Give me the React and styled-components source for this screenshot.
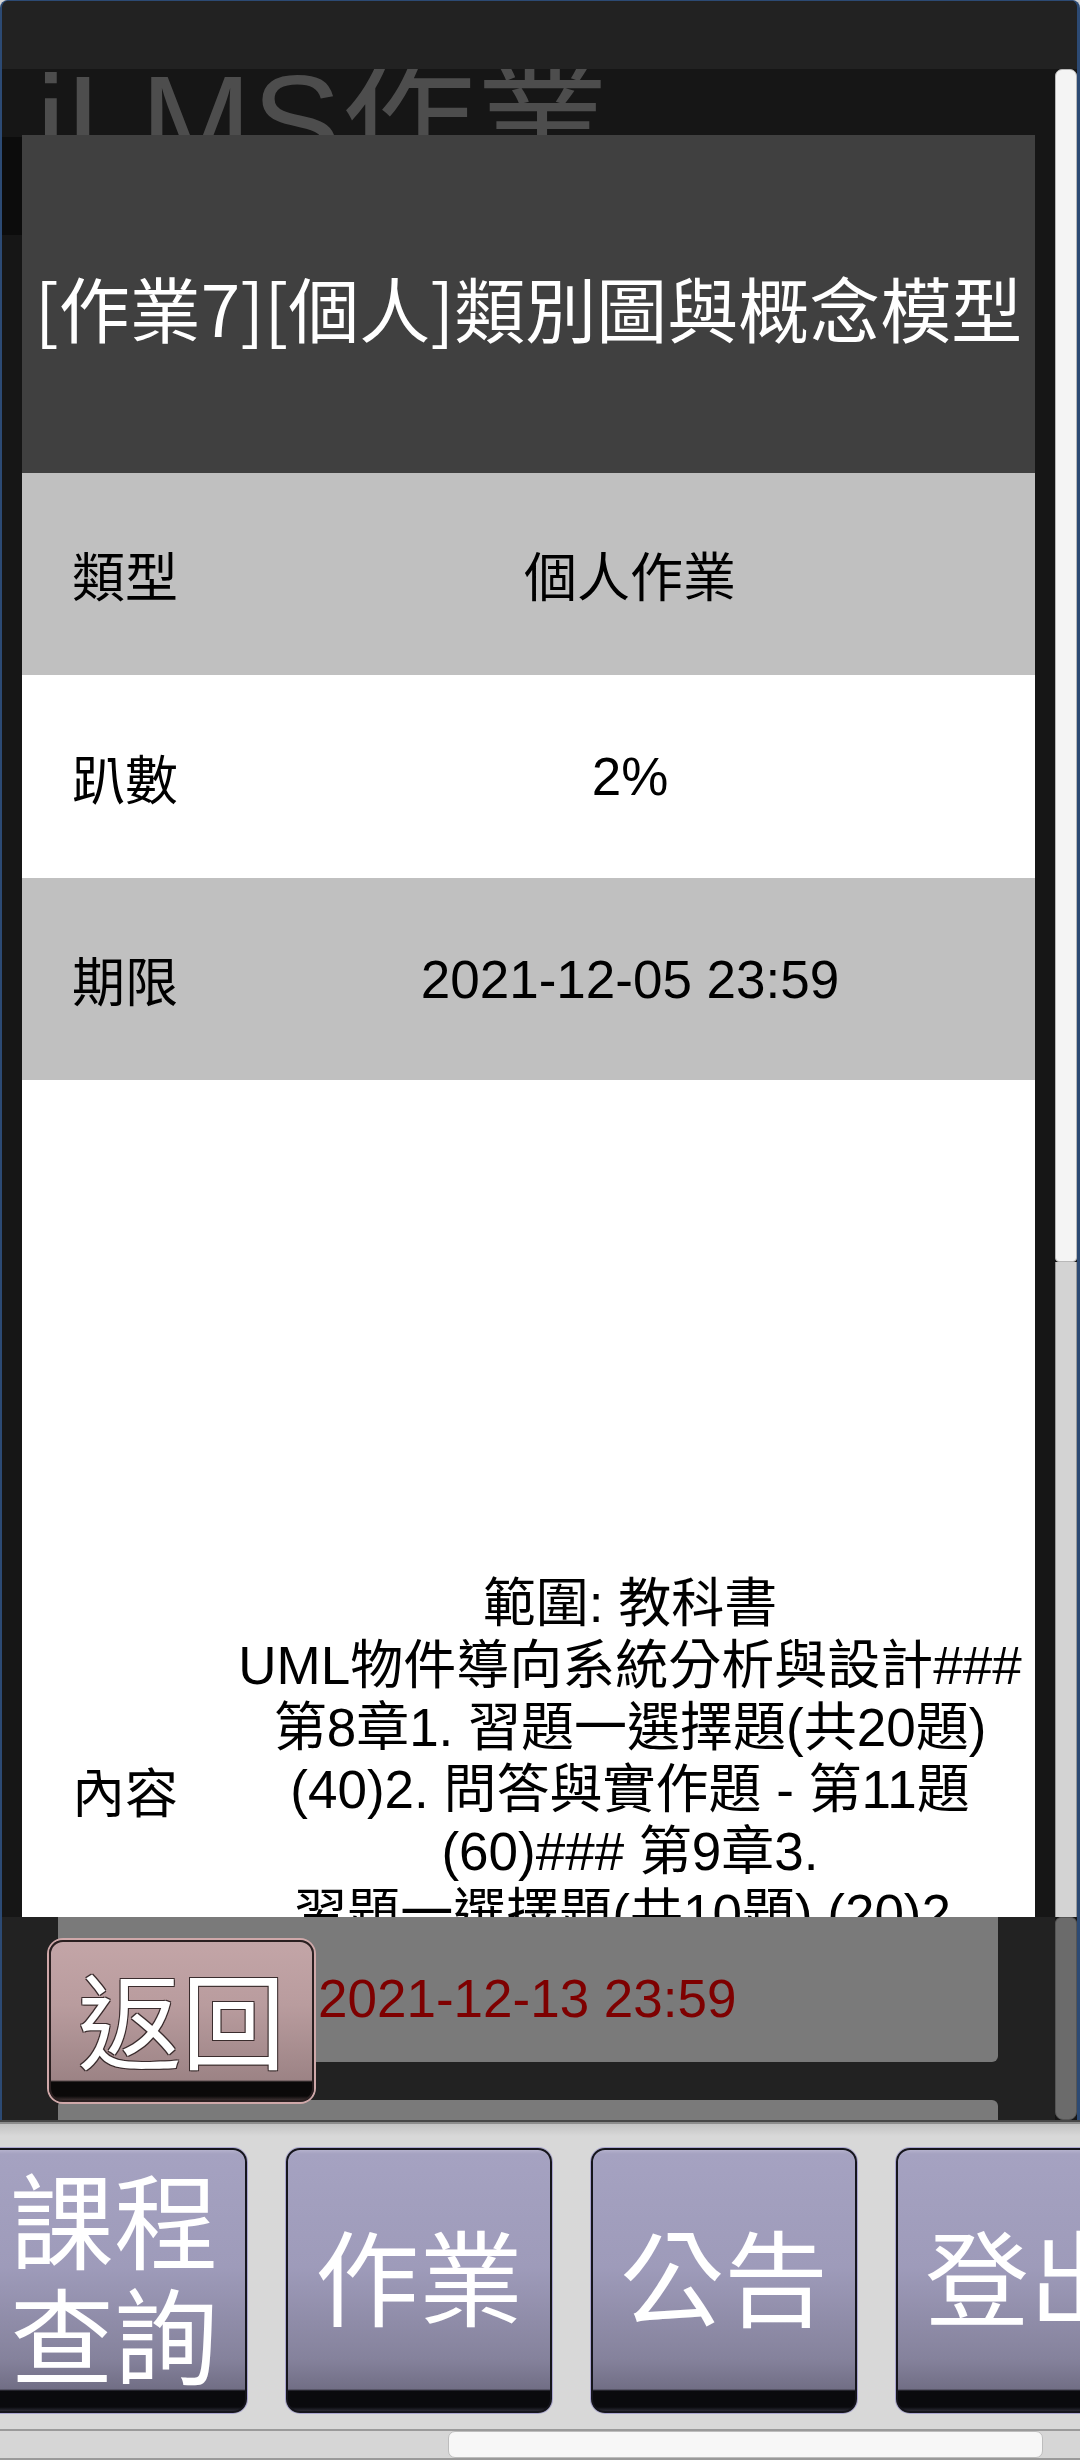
import React from 'react';
import styled, { createGlobalStyle } from 'styled-components';

const CJK = `"Noto Sans CJK TC", "Noto Sans CJK SC", sans-serif`;
const MIX = `"Liberation Sans", "Noto Sans CJK TC", sans-serif`;

const GlobalStyle = createGlobalStyle`
  html, body { margin: 0; padding: 0; background: #d6d6d6; }
  * { box-sizing: border-box; }
  #root { width: 1080px; }
`;

const Screen = styled.div`
  width: 1080px;
  height: 2460px;
  display: flex;
  flex-direction: column;
  overflow: hidden;
  background: #d6d6d6;
`;

const Window = styled.div`
  height: 2120px;
  flex-shrink: 0;
  display: flex;
  flex-direction: column;
  background: #222;
  border-top: 1px solid #2c4a74;
  border-left: 2px solid #2c4a74;
  border-right: 3px solid #2c4a74;
  border-top-left-radius: 8px;
  border-top-right-radius: 8px;
  overflow: hidden;
`;

const TopBar = styled.div`
  height: 68px;
  flex-shrink: 0;
  background: #222;
`;

const Main = styled.div`
  flex: 1;
  display: flex;
  min-height: 0;
`;

const ContentCol = styled.div`
  flex: 1;
  position: relative;
  display: flex;
  flex-direction: column;
  background: #161616;
`;

const PageTitle = styled.div`
  height: 66px;
  flex-shrink: 0;
  overflow: hidden;
  padding-left: 34px;
  font-family: ${MIX};
  font-size: 134px;
  line-height: 134px;
  color: #4d4d4d;
  white-space: nowrap;
  letter-spacing: 0;
`;

const TitleInner = styled.div`
  margin-top: -13px;
`;

const Nub = styled.div`
  width: 20px;
  height: 98px;
  margin-top: 2px;
  background: #0c0c0c;
`;

const Spacer = styled.div`
  flex: 1;
`;

const ListPeek = styled.div`
  position: relative;
  height: 203px;
  flex-shrink: 0;
  background: #222;
  padding-left: 56px;
  display: flex;
  flex-direction: column;
  gap: 38px;
`;

const ListItem = styled.div`
  width: 940px;
  height: ${(p) => p.$h}px;
  flex-shrink: 0;
  background: #7a7a7a;
  border-radius: ${(p) => (p.$top ? '6px 6px 0 0' : '0 0 6px 6px')};
  display: flex;
  align-items: center;
  padding-left: 260px;
  padding-top: 18px;
`;

const DateText = styled.span`
  font-family: ${MIX};
  font-size: 53px;
  color: #7e0000;
  white-space: nowrap;
`;

const BackButton = styled.button`
  position: absolute;
  left: 47px;
  top: 23px;
  width: 265px;
  height: 162px;
  padding: 0 0 8px 0;
  border: 2px solid #2a1f20;
  border-radius: 14px;
  box-shadow: 0 0 0 2px #cfa8a9;
  background: linear-gradient(
    to bottom,
    #c3a5a7 0%,
    #b99c9e 40%,
    #9c8385 calc(100% - 20px),
    #0b0909 calc(100% - 18px),
    #0b0909 calc(100% - 4px),
    #3a2e2f 100%
  );
  display: flex;
  align-items: center;
  justify-content: center;
  font-family: ${CJK};
  font-size: 104px;
  line-height: 1;
  color: #fff;
  text-shadow: 1px 1px 0 #3a2c2d, -1px -1px 0 #3a2c2d, 1px -1px 0 #3a2c2d, -1px 1px 0 #3a2c2d;
`;

const Modal = styled.div`
  position: absolute;
  top: 66px;
  left: 20px;
  width: 1013px;
  height: 1782px;
  overflow: hidden;
  background: #fff;
  display: flex;
  flex-direction: column;
`;

const ModalHeader = styled.div`
  height: 338px;
  flex-shrink: 0;
  background: #404040;
  display: flex;
  align-items: center;
  justify-content: center;
  font-family: ${CJK};
  font-size: 71px;
  color: #fff;
  white-space: nowrap;
  padding-top: 4px;
`;

const InfoRow = styled.div`
  height: ${(p) => p.$h}px;
  flex-shrink: 0;
  background: ${(p) => (p.$shade ? '#c0c0c0' : '#ffffff')};
  display: flex;
  align-items: center;
  font-family: ${MIX};
  font-size: 53px;
  color: #000;
`;

const Label = styled.div`
  width: 203px;
  flex-shrink: 0;
  padding-left: 50px;
  white-space: nowrap;
`;

const Value = styled.div`
  flex: 1;
  text-align: center;
  white-space: nowrap;
`;

const ContentValue = styled.div`
  flex: 1;
  display: flex;
  flex-direction: column;
  align-items: center;
  line-height: 62px;
`;

const Line = styled.div`
  white-space: nowrap;
`;

const ScrollRail = styled.div`
  width: 22px;
  flex-shrink: 0;
  display: flex;
  flex-direction: column;
  background: #161616;
`;

const RailThumb = styled.div`
  height: 1193px;
  background: #f4f4f4;
  border: 1px solid #b8b8b8;
  border-radius: 7px 7px 4px 4px;
`;

const RailTrack = styled.div`
  height: 655px;
  background: #d3d3d3;
  border-left: 1px solid #9a9a9a;
  border-right: 1px solid #9a9a9a;
`;

const RailDim = styled.div`
  flex: 1;
  background: #6b6b6b;
  border: 1px solid #555;
  border-radius: 6px 6px 8px 8px;
`;

const TabArea = styled.div`
  flex: 1;
  display: flex;
  flex-direction: column;
  overflow: hidden;
  background: linear-gradient(
    to bottom,
    #474747 0px,
    #474747 2px,
    #8c8c8c 2px,
    #8c8c8c 4px,
    #c2c2c2 4px,
    #d8d8d8 16px,
    #d8d8d8 100%
  );
`;

const TabRow = styled.div`
  display: flex;
  gap: 39px;
  margin-top: 28px;
  margin-left: -19px;
  height: 265px;
  flex-shrink: 0;
`;

const TabButton = styled.button`
  width: 266px;
  height: 265px;
  flex-shrink: 0;
  padding: 0 0 14px 0;
  border: 2px solid #15151c;
  border-radius: 14px;
  box-shadow: 0 0 0 1px #a9a5cf;
  background: linear-gradient(
    to bottom,
    #b4b1cc 0px,
    #a5a2c1 4px,
    #9e9bba 45%,
    #85829c 80%,
    #716e85 calc(100% - 22px),
    #0a0a0d calc(100% - 20px),
    #0a0a0d calc(100% - 4px),
    #2c2b36 100%
  );
  display: flex;
  align-items: center;
  justify-content: center;
  text-align: center;
  font-family: ${CJK};
  font-size: 104px;
  line-height: 115px;
  color: #fff;
`;

const TabLabel = styled.span`
  display: block;
  width: 216px;
  word-break: break-all;
`;

const HScroll = styled.div`
  margin-top: 16px;
  flex: 1;
  background: #d6d6d6;
  border-top: 2px solid #9a9a9a;
  border-bottom: 2px solid #9a9a9a;
  padding-left: 448px;
`;

const HThumb = styled.div`
  width: 595px;
  height: 100%;
  background: #f7f7f7;
  border: 1px solid #bdbdbd;
  border-radius: 7px;
`;

const rows = [
  { label: '類型', value: '個人作業', shade: true, h: 202 },
  { label: '趴數', value: '2%', shade: false, h: 203 },
  { label: '期限', value: '2021-12-05 23:59', shade: true, h: 202 },
];

const contentLines = [
  '範圍: 教科書',
  'UML物件導向系統分析與設計###',
  '第8章1. 習題一選擇題(共20題)',
  '(40)2. 問答與實作題 - 第11題',
  '(60)### 第9章3.',
  '習題一選擇題(共10題) (20)2.',
  '問答與實作題 - 第14題 (80)',
];

const tabs = ['課程查詢', '作業', '公告', '登出'];

export default function App() {
  return (
    <>
      <GlobalStyle />
      <Screen>
        <Window>
          <TopBar />
          <Main>
            <ContentCol>
              <PageTitle>
                <TitleInner>iLMS作業</TitleInner>
              </PageTitle>
              <Nub />
              <Spacer />
              <ListPeek>
                <ListItem $h={145}>
                  <DateText>2021-12-13 23:59</DateText>
                </ListItem>
                <ListItem $h={40} $top />
                <BackButton>返回</BackButton>
              </ListPeek>
              <Modal>
                <ModalHeader>[作業7][個人]類別圖與概念模型</ModalHeader>
                {rows.map((r) => (
                  <InfoRow key={r.label} $shade={r.shade} $h={r.h}>
                    <Label>{r.label}</Label>
                    <Value>{r.value}</Value>
                  </InfoRow>
                ))}
                <InfoRow $h={1420}>
                  <Label>內容</Label>
                  <ContentValue>
                    {contentLines.map((l) => (
                      <Line key={l}>{l}</Line>
                    ))}
                  </ContentValue>
                </InfoRow>
              </Modal>
            </ContentCol>
            <ScrollRail>
              <RailThumb />
              <RailTrack />
              <RailDim />
            </ScrollRail>
          </Main>
        </Window>
        <TabArea>
          <TabRow>
            {tabs.map((t) => (
              <TabButton key={t}>
                <TabLabel>{t}</TabLabel>
              </TabButton>
            ))}
          </TabRow>
          <HScroll>
            <HThumb />
          </HScroll>
        </TabArea>
      </Screen>
    </>
  );
}
